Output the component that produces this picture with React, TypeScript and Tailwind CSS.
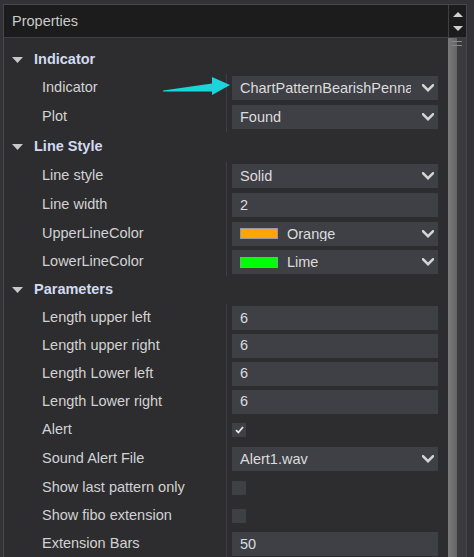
import React from "react";

const Chevron = () => (
  <svg width="12" height="8" viewBox="0 0 12 8" className="block">
    <polyline points="1,1.2 6,6.2 11,1.2" fill="none" stroke="#d4d4d4" strokeWidth="2.4" strokeLinecap="square" />
  </svg>
);

const Tri = () => (
  <svg width="11" height="6" viewBox="0 0 11 6" className="block">
    <polygon points="0,0 11,0 5.5,6" fill="#c8c8c8" />
  </svg>
);

const Category = ({ title, h }: { title: string; h: string }) => (
  <div className={`${h} flex items-center pl-[8px]`}>
    <Tri />
    <span className="ml-[11px] font-bold text-[#d2daf2]">{title}</span>
  </div>
);

const Row = ({ label, h, children }: { label: string; h: string; children: React.ReactNode }) => (
  <div className={`${h} flex`}>
    <div className="w-[222px] flex items-center pl-[38px] text-[#d2d2d2] whitespace-nowrap">{label}</div>
    <div className="w-[222px] flex items-center border-l border-[#3e3e42] pl-[5px] pr-[10px]">{children}</div>
  </div>
);

const Select = ({ value, swatch }: { value: string; swatch?: string }) => (
  <div className="w-[206px] h-[24px] bg-[#3f3f46] flex items-center pl-[8px]">
    {swatch && (
      <div className="w-[38px] h-[11px] border border-[#9a9a9a] mr-[9px] shrink-0" style={{ backgroundColor: swatch }} />
    )}
    <div className="flex-1 overflow-hidden whitespace-nowrap text-[#dcdcdc] leading-none">{value}</div>
    <div className="w-[27px] flex justify-end pr-[4px] shrink-0">
      <Chevron />
    </div>
  </div>
);

const Input = ({ value }: { value: string }) => (
  <div className="w-[206px] h-[24px] bg-[#3f3f46] flex items-center pl-[8px] text-[#dcdcdc] leading-none">{value}</div>
);

const Check = ({ checked }: { checked?: boolean }) => (
  <div className="w-[14px] h-[14px] bg-[#3f3f46] flex items-center justify-center">
    {checked && (
      <svg width="9" height="8" viewBox="0 0 9 8" className="block">
        <polyline points="1,4.2 3.4,6.5 8,1" fill="none" stroke="#e6e6e6" strokeWidth="1.8" />
      </svg>
    )}
  </div>
);

export default function App() {
  return (
    <div className="w-[474px] h-[557px] bg-[#333337] overflow-hidden relative font-['Liberation_Sans',Arial,sans-serif] text-[14.5px]">
      <div className="ml-[3px] mt-[4px] w-[464px] h-[560px] border-l border-t border-r border-[#47474b] flex flex-col">
        <div className="h-[33px] flex border-b border-[#3f3f46] shrink-0">
          <div className="w-[444px] bg-[#1c1c1d] flex items-center pl-[8px] pt-[2px] text-[#cacaca]">Properties</div>
          <div className="flex-1 bg-[#1c1c1d] border-l border-[#3f3f46] flex flex-col items-center pt-[7px] gap-[9px]">
            <svg width="10" height="5" viewBox="0 0 10 5" className="block">
              <polygon points="0,5 10,5 5,0" fill="#d0d0d0" />
            </svg>
            <svg width="10" height="5" viewBox="0 0 10 5" className="block">
              <polygon points="0,0 10,0 5,5" fill="#d0d0d0" />
            </svg>
          </div>
        </div>
        <div className="flex-1 flex">
          <div className="w-[444px] bg-[#2d2d30] pt-[8px]">
            <Category title="Indicator" h="h-[28px]" />
            <Row label="Indicator" h="h-[28.5px]"><Select value="ChartPatternBearishPennant" /></Row>
            <Row label="Plot" h="h-[29.5px]"><Select value="Found" /></Row>
            <Category title="Line Style" h="h-[29.5px]" />
            <Row label="Line style" h="h-[29px]"><Select value="Solid" /></Row>
            <Row label="Line width" h="h-[29px]"><Input value="2" /></Row>
            <Row label="UpperLineColor" h="h-[28.5px]"><Select value="Orange" swatch="#ffa500" /></Row>
            <Row label="LowerLineColor" h="h-[28px]"><Select value="Lime" swatch="#00ff00" /></Row>
            <Category title="Parameters" h="h-[28px]" />
            <Row label="Length upper left" h="h-[27.5px]"><Input value="6" /></Row>
            <Row label="Length upper right" h="h-[28px]"><Input value="6" /></Row>
            <Row label="Length Lower left" h="h-[28px]"><Input value="6" /></Row>
            <Row label="Length Lower right" h="h-[28px]"><Input value="6" /></Row>
            <Row label="Alert" h="h-[28.5px]"><Check checked /></Row>
            <Row label="Sound Alert File" h="h-[29.5px]"><Select value="Alert1.wav" /></Row>
            <Row label="Show last pattern only" h="h-[29px]"><Check /></Row>
            <Row label="Show fibo extension" h="h-[27.5px]"><Check /></Row>
            <Row label="Extension Bars" h="h-[27.5px]"><Input value="50" /></Row>
          </div>
          <div className="flex-1 flex relative bg-[#3a3a3d]">
            <div className="w-[9px] bg-gradient-to-r from-[#7a7a7a] to-[#646464]" />
            <div className="flex-1 bg-[#3b3b3e]" />
            <div className="absolute left-[4px] top-[3px] w-[10px] h-[1px] bg-[#8a8a8a]" />
            <div className="absolute left-[4px] top-[7px] w-[10px] h-[1px] bg-[#8a8a8a]" />
          </div>
        </div>
      </div>
      <svg className="absolute left-0 top-0 pointer-events-none" width="474" height="557" viewBox="0 0 474 557">
        <polygon points="163,90.5 212,83.5 212,77 230,85 212,95 212,91.5 163,91.5" fill="#1ad6da" />
      </svg>
    </div>
  );
}
